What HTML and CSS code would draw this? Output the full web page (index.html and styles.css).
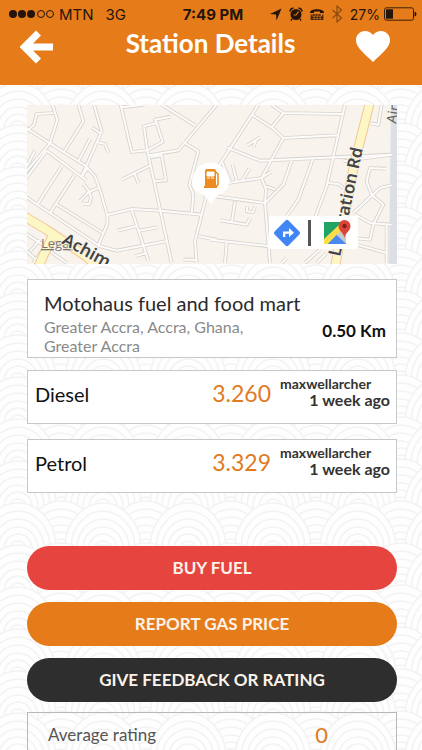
FILE: index.html
```html
<!DOCTYPE html>
<html lang="en">
<head>
    <meta charset="UTF-8">
    <meta name="viewport" content="width=device-width, initial-scale=1">
    <title>Station Details</title>
    <link rel="stylesheet" href="styles.css">
</head>
<body>
    <header class="header">
        <div class="status-bar">
            <div class="status-left">
                <svg width="46" height="10" viewBox="0 0 46 10">
                    <circle cx="4" cy="5" r="4"/>
                    <circle cx="13" cy="5" r="4"/>
                    <circle cx="22" cy="5" r="4"/>
                    <circle class="outline" cx="32" cy="5" r="3.5"/>
                    <circle class="outline" cx="41" cy="5" r="3.5"/>
                </svg>
                <span>MTN</span>
                <span class="network">3G</span>
            </div>
            <span class="clock">7:49 PM</span>
            <div class="status-right">
                <svg width="13" height="13" viewBox="0 0 13 13"><path d="M12.5.5 7.5 12.5 7 6.500 1 6z"/></svg>
                <svg width="14" height="14" viewBox="0 0 14 14">
                    <circle cx="7" cy="7.500" r="5.500"/>
                    <path d="M1 4.500A4 4 0 0 1 4.500 1M9.500 1A4 4 0 0 1 13 4.500" fill="none" stroke="#24140a" stroke-width="1.600"/>
                    <path d="M3 12 2 13.500M11 12l1 1.500" stroke="#24140a" stroke-width="1.500"/>
                    <path d="M9.500 4.500 7 8H4.500" fill="none" stroke="#e67c19" stroke-width="1.200"/>
                </svg>
                <svg width="14" height="12" viewBox="0 0 14 12">
                    <path d="M0 4.500C0 0 14 0 14 4.500V5H10V3.500H4V5H0z"/>
                    <path d="M2.500 7h9M1.500 9.200h11M1.500 11.200h11" fill="none" stroke="#24140a" stroke-width="1.400" stroke-dasharray="2.200 .8"/>
                    <path d="M1.200 6.500V12M12.800 6.500V12" stroke="#24140a"/>
                </svg>
                <svg width="12" height="18" viewBox="0 0 12 18"><path d="M1.500 5 10.500 13 6 17V1l4.500 4-9 8" fill="none" stroke="#8a4b12" stroke-width="1.200"/></svg>
                <span class="percent">27%</span>
                <svg width="33" height="14" viewBox="0 0 33 14">
                    <rect x=".5" y=".8" width="29" height="12.400" rx="2" fill="none" stroke="#3a1f08"/>
                    <rect x="2" y="2.300" width="7" height="9.400"/>
                    <path d="M30.500 4.500q2 .5 2 2.500t-2 2.500z"/>
                </svg>
            </div>
        </div>
        <div class="title-bar">
            <button class="icon-button" aria-label="Back">
                <svg width="34" height="34" viewBox="0 0 34 34"><path d="M18.500 3 4.500 17 18.500 31M5 17H33" fill="none" stroke="#fff" stroke-width="7"/></svg>
            </button>
            <h1>Station Details</h1>
            <button class="icon-button" aria-label="Favourite">
                <svg width="36" height="33" viewBox="0 0 36 33"><path d="M18 32 15 29C6 21 1 16 1 10 1 5 5 1 10 1c3 0 6 1.500 8 4 2-2.500 5-4 8-4 5 0 9 4 9 9 0 6-5 11-14 19z" fill="#fff"/></svg>
            </button>
        </div>
    </header>

    <main class="content">
        <section class="map">
            <svg class="map-canvas" viewBox="0 0 370 159" preserveAspectRatio="xMidYMid slice">
                <defs>
                    <g id="streets">
                        <!-- west side -->
                        <g transform="translate(-7 -7) scale(.3333)">
                            <path d="M15 88 90 136 195 202 225 235 240 275 262 352V378L235 442M80 158 200 248M90 136 15 225M80 158 15 245M90 136 112 65 97 20M100 45 50 48 42 80 20 100M130 165 190 70 175 20M185 235 245 100 222 20M215 88 240 105M175 190 210 122M230 132 255 138 265 163M205 208 185 235"/>
                            <path d="M45 158 15 215M125 205 52 320M163 232 90 345M108 318 248 405M15 295 240 445 290 458 438 430M260 352 335 333 422 338 545 350M335 335 385 488M292 398 350 384M358 398 412 388M345 475 380 465M190 258 208 280 180 310M200 285 235 270M208 280 213 300 208 318H190"/>
                            <path d="M302 20 335 162 382 157 428 132 410 75 372 85 382 157 455 495M305 28 370 20M410 75 405 65 452 56M388 172 475 157 590 20M425 20 525 82M490 132 535 160 508 260 520 290 515 348M392 178 425 172 438 247 405 250M305 245 390 203M343 225 355 255M560 290 525 430 530 495M535 415 590 425M490 485H528"/>
                            <path d="M15 405 75 445 40 495M60 425 30 460M90 460 140 495M15 455 60 495"/>
                        </g>
                        <!-- east side -->
                        <g transform="translate(183 -7) scale(.3333)">
                            <path d="M145 20 0 245M185 20 220 45 400 48M220 45 185 88 125 50M185 88 220 120 382 112M50 148 150 188 545 170M220 120 155 240 55 255 25 235M112 142 150 118M130 148 140 122M405 20 350 265 300 400M245 188 220 260 165 315 15 295M308 185 265 305 230 355M155 240 168 275 165 315 180 495M168 265 195 275M155 240 185 220M35 190 60 250M68 200 80 250M118 212 95 250"/>
                            <path d="M355 255 385 258 400 270M515 20 505 80 475 75M545 170 470 180 400 190M528 212 480 210 470 250 485 290 520 320 490 380 480 425 430 420M545 262 510 270 430 345M435 350 480 375 545 380M0 425 180 445M50 430 45 495M75 310 65 375M30 367 110 380 120 360M135 325 130 342 110 340 112 325M440 440 530 465M530 380V495M215 495 230 480M285 495 330 455M320 495 350 465"/>
                        </g>
                    </g>
                </defs>
                <rect width="370" height="159" fill="#f8f4ed"/>
                <path d="M364 0 362 159H370V0z" fill="#dce0e6"/>
                <use href="#streets" class="street-edge"/>
                <use href="#streets" class="street-fill"/>
                <path class="avenue-edge" d="M-5 110 20 125 60 152 70 162M27 128 11 162"/>
                <path class="avenue-fill" d="M-5 110 20 125 60 152 70 162M27 128 11 162"/>
                <path class="avenue-edge" d="M343-3 327 60 308 162"/>
                <path class="avenue-fill" d="M343-3 327 60 308 162"/>
                <text class="legal" x="14" y="143">Legal</text>
                <text class="road-name" transform="translate(34 138) rotate(29)">Achim</text>
                <text class="road-name" transform="translate(313 152) rotate(-78)">Liberation Rd</text>
                <text class="place-name" transform="translate(369 19) rotate(-80)">Air</text>
                <!-- station pin -->
                <path d="M184 99 177 90C169 88 165 83 165 76a18 18 0 0 1 37 0c0 7-4 12-11 14z" fill="#fff"/>
                <path d="M178 66q0-2 2-2h7q2 0 2 2v15h1v2h-13v-2h1z" fill="#ec8c20"/>
                <path d="M180 67h7v4h-7zM180 73h3M184 73h3" fill="#fff" stroke="#fff"/>
                <path d="M189 67l2 2v10q0 2-2 2" fill="none" stroke="#ec8c20" stroke-width="1.500"/>
            </svg>
            <div class="map-links">
                <a href="#directions" aria-label="Directions">
                    <svg width="28" height="28" viewBox="0 0 28 28">
                        <path d="M12.500 1.600q1.500-1.500 3 0L26.400 12.500q1.500 1.500 0 3L15.500 26.400q-1.500 1.500-3 0L1.600 15.500q-1.500-1.500 0-3z" fill="#4285f4"/>
                        <path d="M10 18V12.500H16V9l5 4.700-5 4.300v-3.300H12.300V18z" fill="#fff"/>
                    </svg>
                </a>
                <span class="divider"></span>
                <a href="#maps" aria-label="Open in Maps">
                    <svg width="28" height="27" viewBox="0 0 28 27">
                        <path d="M1 3H23V25H1z" fill="#1fa463"/>
                        <path d="M12 15 23 25V10l-5-1z" fill="#c7cbd1"/>
                        <path d="M1 25V20L17 5l4 4L5 25z" fill="#fddc4b"/>
                        <path d="M5 25 13.500 16 23 25z" fill="#4a89f3"/>
                        <path d="M21.500 19c-.5-5-6-7-6-12a6 6 0 0 1 12 0c0 5-5.500 7-6 12z" fill="#dc4437"/>
                        <circle cx="21.500" cy="7" r="2.200" fill="#7b231d"/>
                    </svg>
                </a>
            </div>
        </section>

        <section class="card station">
            <div class="station-info">
                <h2>Motohaus fuel and food mart</h2>
                <p>Greater Accra, Accra, Ghana, Greater Accra</p>
            </div>
            <span class="distance">0.50 Km</span>
        </section>

        <section class="card price-row">
            <span class="fuel">Diesel</span>
            <span class="price">3.260</span>
            <div class="reporter">
                <span>maxwellarcher</span>
                <span class="when">1 week ago</span>
            </div>
        </section>

        <section class="card price-row">
            <span class="fuel">Petrol</span>
            <span class="price">3.329</span>
            <div class="reporter">
                <span>maxwellarcher</span>
                <span class="when">1 week ago</span>
            </div>
        </section>

        <div class="actions">
            <button class="action buy">BUY FUEL</button>
            <button class="action report">REPORT GAS PRICE</button>
            <button class="action feedback">GIVE FEEDBACK OR RATING</button>
        </div>

        <section class="rating">
            <span>Average rating</span>
            <span class="rating-value">0</span>
        </section>
    </main>
</body>
</html>
```
FILE: styles.css
```css
* {
    box-sizing: border-box;
}

body {
    display: flex;
    flex-direction: column;
    height: 100vh;
    margin: 0;
    font-family: Lato, "Liberation Sans", sans-serif;
    color: #111;
    background-color: #fefefe;
    /* overlapping wave scales */
    background-image: url("data:image/svg+xml,%3Csvg xmlns='http://www.w3.org/2000/svg' xmlns:xlink='http://www.w3.org/1999/xlink' width='85' height='42' viewBox='0 0 85 42'%3E%3Cdefs%3E%3Cg id='s' fill='none' stroke='%23f3f3f3' stroke-width='1.5'%3E%3Cellipse rx='38' ry='45' fill='%23fefefe'/%3E%3Cellipse rx='32' ry='37'/%3E%3Cellipse rx='26' ry='29'/%3E%3Cellipse rx='20' ry='21'/%3E%3Cellipse rx='14' ry='14'/%3E%3Cellipse rx='8' ry='7'/%3E%3C/g%3E%3Cg id='r'%3E%3Cuse xlink:href='%23s' x='-24'/%3E%3Cuse xlink:href='%23s' x='61'/%3E%3Cuse xlink:href='%23s' x='18' y='2'/%3E%3Cuse xlink:href='%23s' x='103' y='2'/%3E%3C/g%3E%3C/defs%3E%3Cuse xlink:href='%23r' y='-42'/%3E%3Cuse xlink:href='%23r' y='0'/%3E%3Cuse xlink:href='%23r' y='42'/%3E%3Cuse xlink:href='%23r' y='84'/%3E%3C/svg%3E");
}

h1, h2, p {
    margin: 0;
}

button {
    border: none;
    font-family: inherit;
    cursor: pointer;
}

svg {
    display: block;
}

.header {
    flex: none;
    height: 85px;
    background-color: #e67c19;
}

.status-bar {
    display: grid;
    grid-template-columns: 1fr auto 1fr;
    align-items: center;
    height: 28px;
    padding: 0 5px 0 9px;
    font-family: Inter, "Liberation Sans", sans-serif;
    font-size: 15px;
    color: #24140a;
}

.status-bar svg {
    fill: #24140a;
}

.status-bar .outline {
    fill: none;
    stroke: #24140a;
}

.status-left, .status-right {
    display: flex;
    align-items: center;
    gap: 4px;
}

.status-right {
    justify-content: flex-end;
    gap: 7px;
}

.network {
    margin-left: 8px;
}

.clock {
    font-weight: 700;
}

.percent {
    margin-right: -3px;
    font-size: 14px;
}

.title-bar {
    display: flex;
    align-items: flex-start;
    padding: 2px 31px 0 20px;
}

.title-bar h1 {
    flex: 1;
    padding-left: 12px;
    font-size: 26px;
    line-height: 26px;
    text-align: center;
    color: #fff;
}

.icon-button {
    padding: 0;
    background: none;
}

.content {
    flex: 1;
    min-height: 0;
    overflow-y: auto;
    scrollbar-width: none;
    padding: 20px 25px 0 27px;
}

.map {
    position: relative;
    height: 159px;
    overflow: hidden;
    margin-bottom: 15px;
}

.map-canvas {
    width: 100%;
    height: 100%;
}

.street-edge, .street-fill, .avenue-edge, .avenue-fill {
    fill: none;
    stroke-linejoin: round;
}

.street-edge {
    stroke: #d6d2cd;
    stroke-width: 11;
}

.street-fill {
    stroke: #fdfcfa;
    stroke-width: 6;
}

.avenue-edge {
    stroke: #f3c795;
    stroke-width: 10;
}

.avenue-fill {
    stroke: #fdf6c5;
    stroke-width: 8;
}

.legal {
    font: 13px "Open Sans", sans-serif;
    fill: #777;
    text-decoration: underline;
}

.road-name {
    font: 600 17px "Noto Sans", sans-serif;
    fill: #444;
    stroke: #f8f4ed;
    stroke-width: 2;
    paint-order: stroke;
}

.place-name {
    font: 14px "Noto Sans", sans-serif;
    fill: #666;
}

.map-links {
    position: absolute;
    right: 39px;
    bottom: 15px;
    display: flex;
    align-items: center;
    gap: 7px;
    height: 33px;
    padding: 0 7px 0 4px;
    background-color: #fff;
}

.divider {
    width: 3px;
    height: 26px;
    margin-right: 5px;
    background-color: #555;
}

.card {
    display: flex;
    margin-bottom: 15px;
    border: 1px solid #c8c8c8;
    background-color: #fff;
}

.station {
    align-items: flex-start;
    justify-content: space-between;
    height: 79px;
    margin-bottom: 12px;
    padding: 9px 10px 0 16px;
}

.station h2 {
    font-size: 20px;
    font-weight: 400;
    line-height: 28px;
    white-space: nowrap;
    color: #2b2b2b;
}

.station p {
    width: 220px;
    font-size: 16px;
    line-height: 19px;
    color: #8a8a8a;
}

.station-info {
    width: 260px;
}

.distance {
    padding-top: 31px;
    font-size: 17px;
    font-weight: 700;
    white-space: nowrap;
}

.price-row {
    height: 54px;
    padding: 4px 6px 0 7px;
}

.fuel {
    flex: 1;
    font-size: 20px;
    line-height: 38px;
}

.price {
    font-size: 23px;
    line-height: 36px;
    color: #e07b22;
}

.reporter {
    display: flex;
    flex-direction: column;
    width: 110px;
    margin-left: 9px;
    font-size: 14px;
    font-weight: 700;
    line-height: 18px;
    color: #333;
}

.when {
    align-self: flex-end;
    font-size: 16px;
    line-height: 14px;
}

.actions {
    display: flex;
    flex-direction: column;
    gap: 12px;
    padding: 38px 0 10px;
}

.action {
    height: 44px;
    padding: 0 0 2px;
    border-radius: 22px;
    font-size: 17px;
    font-weight: 700;
    color: #fbf3ea;
}

.buy {
    background-color: #e6443e;
}

.report {
    background-color: #e67c19;
}

.feedback {
    background-color: #2e2e2e;
}

.rating {
    display: flex;
    justify-content: space-between;
    height: 54px;
    padding: 7px 68px 0 20px;
    border: 1px solid #b8b8b8;
    font-size: 17px;
    line-height: 30px;
    color: #555;
}

.rating-value {
    font-size: 22px;
    color: #e07b22;
}
```
